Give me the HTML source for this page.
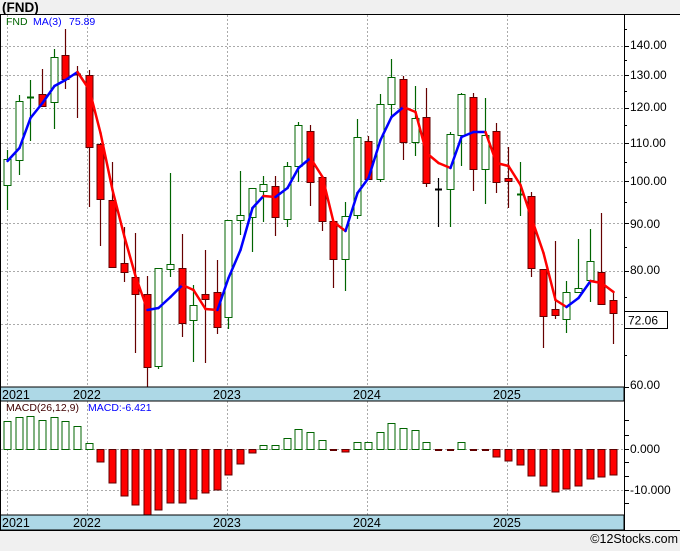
<!DOCTYPE html>
<html><head><meta charset="utf-8"><style>
html,body{margin:0;padding:0;background:#f0f0f0;}
body{width:680px;height:546px;overflow:hidden;font-family:"Liberation Sans",sans-serif;}
svg text{font-family:"Liberation Sans",sans-serif;}
</style></head><body>
<svg id="s" width="680" height="546" xmlns="http://www.w3.org/2000/svg">
<rect x="0" y="0" width="680" height="546" fill="#f0f0f0"/>
<rect x="0" y="14" width="680" height="516" fill="#ffffff"/>
<text x="2" y="12" font-size="13.5" font-weight="bold" fill="#000">(FND)</text>
<g id="grid" stroke="#aaaaaa" stroke-width="1" stroke-dasharray="2,2" fill="none"></g>
<g id="cd"></g>
<g id="ma" fill="none" stroke-width="2.5" stroke-linejoin="round"></g>
<g id="mb"></g>
<rect x="0" y="387" width="624" height="14" fill="#add8e6" stroke="#000" stroke-width="1"/>
<rect x="0" y="515" width="624" height="15" fill="#add8e6" stroke="#000" stroke-width="1"/>
<line x1="0.5" y1="14" x2="0.5" y2="530" stroke="#000"/>
<line x1="624.5" y1="14" x2="624.5" y2="530" stroke="#000"/>
<line x1="0" y1="14.5" x2="680" y2="14.5" stroke="#000"/>
<line x1="0" y1="530.5" x2="680" y2="530.5" stroke="#000"/>
<g id="ticks" stroke="#000"></g>
<g font-size="12.5" fill="#000">
<text x="2" y="399">2021</text><text x="73" y="399">2022</text><text x="213" y="399">2023</text><text x="353" y="399">2024</text><text x="493" y="399">2025</text>
<text x="2" y="527">2021</text><text x="73" y="527">2022</text><text x="213" y="527">2023</text><text x="353" y="527">2024</text><text x="493" y="527">2025</text>
</g>
<g font-size="12" fill="#000">
<text x="630" y="49">140.00</text><text x="630" y="79">130.00</text><text x="630" y="111">120.00</text><text x="630" y="147">110.00</text>
<text x="630" y="185">100.00</text><text x="630" y="228">90.00</text><text x="630" y="274">80.00</text><text x="630" y="389">60.00</text>
<text x="630" y="453">0.000</text><text x="630" y="494">-10.000</text>
</g>
<rect x="624.5" y="311.5" width="43" height="17" fill="#fff" stroke="#000"/>
<text x="628" y="324.5" font-size="12" fill="#000">72.06</text>
<text x="6" y="25" font-size="10.5" fill="#006400">FND</text>
<text x="33" y="25" font-size="10.5" fill="#0000ff">MA(3)</text>
<text x="69" y="25" font-size="10.5" fill="#0000ff">75.89</text>
<text x="6" y="411" font-size="10.5" fill="#400000">MACD(26,12,9)</text>
<text x="88" y="411" font-size="10.5" fill="#0000ff">MACD:-6.421</text>
<text x="678" y="543" font-size="12.5" fill="#000" text-anchor="end">©12Stocks.com</text>
</svg>
<script>
var NS="http://www.w3.org/2000/svg";
function el(p,t,a){var e=document.createElementNS(NS,t);for(var k in a)e.setAttribute(k,a[k]);p.appendChild(e);return e;}
var g=document.getElementById('grid');
[46,75,108,143,181,223,271,324].forEach(function(y){el(g,'line',{x1:1,y1:y+.5,x2:624,y2:y+.5});});
[490.5,449.5].forEach(function(y){el(g,'line',{x1:1,y1:y,x2:624,y2:y});});
[7,87,227,367,507].forEach(function(x){el(g,'line',{x1:x+.5,y1:15,x2:x+.5,y2:387});el(g,'line',{x1:x+.5,y1:401,x2:x+.5,y2:515});});
var t=document.getElementById('ticks');
[46,75,108,143,181,223,271,324,387,420,435,449,462,476,490,503].forEach(function(y){el(t,'line',{x1:624,y1:y+.5,x2:629,y2:y+.5});});
[29,60,91,125,162,202,247,297,355].forEach(function(y){el(t,'line',{x1:624,y1:y+.5,x2:627,y2:y+.5});});
var C=[['g',150,210,159,185],['g',95,175,101,160],['g',80,141,97,99],['r',69,106,94,106],['g',49,129,57,102],['r',29,89,55,79],['r',66,118,74,76],['r',70,207,75,147],['r',143,246,144,199],['r',162,268,200,267],
['r',227,282,263,272],['r',233,353,277,294],['r',276,387,294,367],['g',268,369,268,366],['g',173,277,264,269],['r',234,337,268,323],['g',285,362,305,320],['r',250,363,294,299],['r',260,334,292,327],['g',220,329,220,317],
['g',171,235,215,220],['g',188,252,188,217],['g',176,222,184,191],['r',176,236,186,217],['g',162,227,166,219],['g',122,182,125,166],['r',125,206,131,182],['r',177,231,177,221],['r',221,288,221,259],['g',202,291,216,259],
['g',119,219,137,215],['r',136,180,141,179],['g',94,182,104,179],['g',59,117,77,104],['r',76,160,79,142],['g',86,156,118,142],['r',88,187,117,183],['k',178,227,189,189],['g',132,227,134,189],['g',93,166,94,135],
['r',93,191,97,169],['g',98,204,135,169],['r',123,193,131,182],['r',147,208,178,181],['g',162,216,194,196],['r',192,277,196,268],['r',269,348,269,316],['r',241,319,309,315],['g',281,333,292,319],['g',239,293,288,292],
['g',229,302,261,280],['r',213,305,272,304],['r',291,344,300,313]];
var cd=document.getElementById('cd');
function X(i){return Math.round(7+i*11.65);}
C.forEach(function(c,i){var x=X(i);
 var wc=c[0]=='r'?'#660000':(c[0]=='g'?'#006400':'#000');
 el(cd,'line',{x1:x+.5,y1:c[1],x2:x+.5,y2:c[2],stroke:wc,'stroke-width':1.2});
 var h=c[4]-c[3];
 if(h<3){el(cd,'line',{x1:x-3,y1:c[3]+.5,x2:x+4,y2:c[3]+.5,stroke:wc,'stroke-width':2});}
 else el(cd,'rect',{x:x-3,y:c[3]+.5,width:7,height:h,fill:c[0]=='r'?'#ff0000':'#fff',stroke:c[0]=='r'?'#600000':'#006400','stroke-width':1});
});
var M=[161,148,118,103,86,80,72,90,133,190,237,276,310,308,297,285,290,309,310,278,250,208,196,197,188,168,158,177,222,231,193,178,140,117,107,112,153,163,168,137,132,132,163,166,185,218,253,300,307,298,281,283,292];
var ma=document.getElementById('ma');
for(var i=1;i<M.length;i++){el(ma,'line',{x1:X(i-1)+.5,y1:M[i-1],x2:X(i)+.5,y2:M[i],stroke:M[i]>M[i-1]?'#ff0000':'#0000ff','stroke-linecap':'round'});}
var B=[421,417,416,420,417,421,426,443,462,483,496,505,515,510,503,503,499,493,490,475,464,453,445,445,438,429,432,440,450,452,442,442,432,423,428,430,442,450,450,442,450,450,457,461,465,476,486,492,489,486,479,477,475];
var mb=document.getElementById('mb');
B.forEach(function(y,i){var x=X(i);var z=449.5;
 if(y<z) el(mb,'rect',{x:x-3,y:y+.5,width:7,height:z-y-.5,fill:'#fff',stroke:'#006400'});
 else if(y-z<2) el(mb,'line',{x1:x-3,y1:z+.5,x2:x+4,y2:z+.5,stroke:'#600000','stroke-width':2});
 else el(mb,'rect',{x:x-3,y:z,width:7,height:y-z,fill:'#ff0000',stroke:'#600000'});
});
</script>
</body></html>
